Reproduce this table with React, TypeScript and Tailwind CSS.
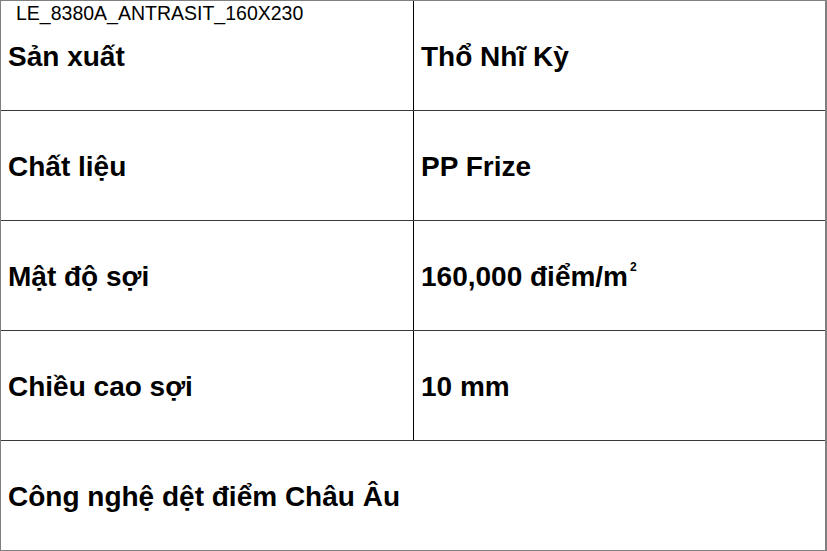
import React from "react";

const font = { fontFamily: '"Liberation Sans", Arial, sans-serif' };

function Row({ left, right, last }: { left: React.ReactNode; right?: React.ReactNode; last?: boolean }) {
  return (
    <div className={`flex ${last ? "h-[109px]" : "h-[110px] border-b border-[#3a3a3a]"}`}>
      {right === undefined ? (
        <div className="flex items-center pl-[7px] pt-[2px] text-[28px] font-bold text-black">{left}</div>
      ) : (
        <>
          <div className="flex w-[413px] shrink-0 items-center border-r border-black pl-[7px] pt-[2px] text-[28px] font-bold text-black">
            {left}
          </div>
          <div className="flex flex-1 items-center pl-[7px] pt-[2px] text-[28px] font-bold text-black">{right}</div>
        </>
      )}
    </div>
  );
}

export default function App() {
  return (
    <div className="relative h-[551px] w-[827px] overflow-hidden bg-white" style={font}>
      <div className="flex h-[551px] w-[827px] flex-col border border-[#808080] border-r-2">
        <Row left="Sản xuất" right="Thổ Nhĩ Kỳ" />
        <Row left="Chất liệu" right="PP Frize" />
        <Row
          left="Mật độ sợi"
          right={
            <span>
              160,000 điểm/m
              <span className="relative top-[-15px] ml-[2px] text-[12px]">2</span>
            </span>
          }
        />
        <Row left="Chiều cao sợi" right="10 mm" />
        <Row left="Công nghệ dệt điểm Châu Âu" last />
      </div>
      <div className="absolute left-[16px] top-[3px] text-[19.5px] leading-[20px] text-black">
        LE_8380A_ANTRASIT_160X230
      </div>
    </div>
  );
}
